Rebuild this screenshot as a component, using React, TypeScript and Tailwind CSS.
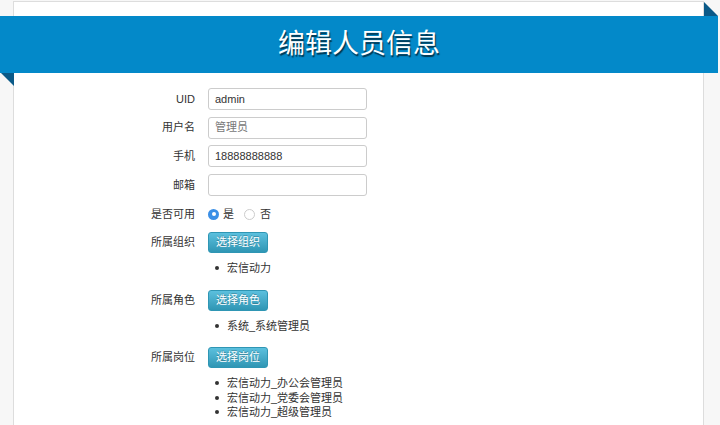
import React from "react";

const font = { fontFamily: '"Liberation Sans", "Noto Sans CJK SC", sans-serif' };

function Label({ children }: { children: React.ReactNode }) {
  return <div className="w-[181px] shrink-0 text-right text-[11px] text-[#333]">{children}</div>;
}

function Field({ label, value, placeholderLike }: { label: string; value: string; placeholderLike?: boolean }) {
  return (
    <div className="flex items-center h-[22px]">
      <Label>{label}</Label>
      <div
        className={`ml-[13px] w-[159px] h-[22px] border border-[#ccc] rounded-[3px] bg-white px-[6px] flex items-center text-[11px] ${
          placeholderLike ? "text-[#777]" : "text-[#333]"
        }`}
      >
        {value}
      </div>
    </div>
  );
}

function Btn({ children }: { children: React.ReactNode }) {
  return (
    <div className="ml-[13px] w-[60px] h-[21px] rounded-[3px] border border-[#2f96b4] bg-gradient-to-b from-[#5bc0de] to-[#2f96b4] text-white text-[11px] flex items-center justify-center [text-shadow:0_-1px_0_rgba(0,0,0,0.25)]">
      {children}
    </div>
  );
}

function List({ items }: { items: string[] }) {
  return (
    <ul className="ml-[208px] -translate-x-[14px] text-[11px] text-[#333] leading-[14.5px]">
      {items.map((t) => (
        <li key={t} className="flex items-center">
          <span className="w-[4px] h-[4px] rounded-full bg-[#333] ml-[7px] mr-[8px]" />
          {t}
        </li>
      ))}
    </ul>
  );
}

export default function App() {
  return (
    <div className="w-[720px] h-[425px] bg-[#f7f7f7] overflow-hidden relative" style={font}>
      <div className="ml-[13px] mt-[1px] w-[691px] h-[430px] border border-[#ddd] bg-white">
        <div className="relative -ml-[14px] mt-[14px] w-[718px] h-[57px] bg-[#0389c9] flex items-center justify-center">
          <span className="text-white text-[27px] leading-none [text-shadow:1px_2px_1px_rgba(0,0,0,0.6)]">编辑人员信息</span>
          <svg className="absolute left-0 top-[57px]" width="14" height="13" viewBox="0 0 14 13">
            <polygon points="1,0 14,0 14,13" fill="#0b5a88" />
          </svg>
          <svg className="absolute left-[704px] -top-[14px]" width="14" height="14" viewBox="0 0 14 14">
            <polygon points="0,0 14,14 0,14" fill="#0b5a88" />
          </svg>
        </div>
        <div className="pt-[15px] flex flex-col">
          <div className="flex flex-col gap-[6.7px]">
            <Field label="UID" value="admin" />
            <Field label="用户名" value="管理员" placeholderLike />
            <Field label="手机" value="18888888888" />
            <Field label="邮箱" value="" />
          </div>
          <div className="flex items-center h-[20px] mt-[8px]">
            <Label>是否可用</Label>
            <div className="ml-[13px] flex items-center text-[11px] text-[#333]">
              <span className="w-[11px] h-[11px] rounded-full bg-[#3b8fe6] flex items-center justify-center">
                <span className="w-[4px] h-[4px] rounded-full bg-white" />
              </span>
              <span className="ml-[4px]">是</span>
              <span className="ml-[10px] w-[11px] h-[11px] rounded-full border border-[#ccc] bg-white" />
              <span className="ml-[5px]">否</span>
            </div>
          </div>
          <div className="flex items-center mt-[8px]">
            <Label>所属组织</Label>
            <Btn>选择组织</Btn>
          </div>
          <div className="mt-[8px]">
            <List items={["宏信动力"]} />
          </div>
          <div className="flex items-center mt-[14px]">
            <Label>所属角色</Label>
            <Btn>选择角色</Btn>
          </div>
          <div className="mt-[8px]">
            <List items={["系统_系统管理员"]} />
          </div>
          <div className="flex items-center mt-[14px]">
            <Label>所属岗位</Label>
            <Btn>选择岗位</Btn>
          </div>
          <div className="mt-[8px]">
            <List items={["宏信动力_办公会管理员", "宏信动力_党委会管理员", "宏信动力_超级管理员"]} />
          </div>
        </div>
      </div>
    </div>
  );
}
